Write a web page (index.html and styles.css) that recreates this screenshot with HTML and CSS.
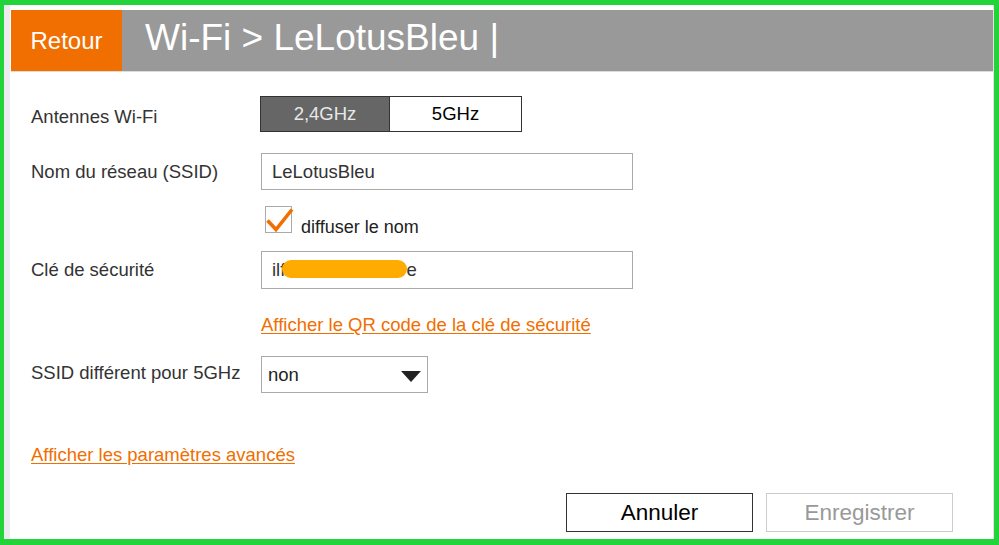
FILE: index.html
```html
<!DOCTYPE html>
<html lang="fr">
<head>
<meta charset="utf-8">
<title>Wi-Fi</title>
<link rel="stylesheet" href="styles.css">
</head>
<body>
<div class="frame">
  <div class="shell">
    <header class="header">
      <div class="back">Retour</div>
      <h1 class="title">Wi-Fi &gt; LeLotusBleu |</h1>
    </header>
    <main class="form">
      <div class="row row-antenna">
        <div class="label label-antenna">Antennes Wi-Fi</div>
        <div class="toggle">
          <div class="seg seg-on">2,4GHz</div>
          <div class="seg">5GHz</div>
        </div>
      </div>
      <div class="row row-ssid">
        <div class="label">Nom du réseau (SSID)</div>
        <div class="input">LeLotusBleu</div>
      </div>
      <div class="row row-check">
        <div class="label"></div>
        <div class="check">
          <div class="box">
            <svg width="27" height="27" viewBox="0 0 27 27"><path d="M2.5 14.5 L11 23.5 L27 3.5" fill="none" stroke="#f16e00" stroke-width="3.6"/></svg>
          </div>
          <span class="check-text">diffuser le nom</span>
        </div>
      </div>
      <div class="row row-key">
        <div class="label">Clé de sécurité</div>
        <div class="input input-key">ilf<span class="mask"></span>e</div>
      </div>
      <div class="row row-qr">
        <div class="label"></div>
        <a class="link" href="#">Afficher le QR code de la clé de sécurité</a>
      </div>
      <div class="row row-select">
        <div class="label label-select">SSID différent pour 5GHz</div>
        <div class="select">
          <span>non</span>
          <svg class="caret" width="20" height="11" viewBox="0 0 20 11"><path d="M0 0 H20 L10 11 Z" fill="#222"/></svg>
        </div>
      </div>
      <div class="row row-adv">
        <a class="link" href="#">Afficher les paramètres avancés</a>
      </div>
      <div class="actions">
        <button class="btn btn-cancel">Annuler</button>
        <button class="btn btn-save">Enregistrer</button>
      </div>
    </main>
  </div>
</div>
</body>
</html>
```

FILE: styles.css
```css
* { box-sizing: border-box; }
html, body { margin: 0; padding: 0; }
body {
  width: 999px;
  height: 545px;
  overflow: hidden;
  font-family: "Liberation Sans", Arial, sans-serif;
  background: #fff;
}
.frame {
  width: 999px;
  height: 545px;
  border: 5px solid #22d33a;
  border-left-width: 4px;
  border-bottom-width: 6px;
  display: flex;
}
.shell {
  flex: 1;
  border-left: 6px solid #ececf0;
  border-right: 1px solid #e2e2e2;
  padding-top: 5px;
  display: flex;
  flex-direction: column;
}
.header {
  display: flex;
  height: 62px;
  margin-left: 1px;
  background: #999;
  border-bottom: 1px solid #dcdcdc;
}
.back {
  width: 111px;
  background: #f16e00;
  color: #fff;
  font-size: 24px;
  display: flex;
  align-items: center;
  justify-content: center;
}
.title {
  margin: 0 0 0 23px;
  font-weight: normal;
  font-size: 37px;
  color: #fff;
  display: flex;
  align-items: center;
  padding-bottom: 5px;
}
.form {
  padding-left: 21px;
  display: flex;
  flex-direction: column;
  color: #333;
  font-size: 18.5px;
}
.row {
  display: flex;
  align-items: center;
}
.label {
  width: 230px;
  flex: none;
}
.label-antenna { padding-top: 5px; }
.label-select { padding-bottom: 3px; }
.row-antenna { margin-top: 24px; }
.toggle {
  display: flex;
  height: 36px;
  border: 1px solid #333;
  margin-left: -1px;
}
.seg {
  width: 131px;
  display: flex;
  align-items: center;
  justify-content: center;
  color: #000;
  background: #fff;
}
.seg-on {
  width: 129px;
  background: #666;
  color: #e8e8e8;
  border-right: 1px solid #333;
}
.row-ssid { margin-top: 21px; }
.input {
  width: 372px;
  height: 37px;
  border: 1px solid #aaa;
  padding-left: 10px;
  display: flex;
  align-items: center;
  color: #333;
}
.row-check { margin-top: 16px; align-items: flex-end; }
.check {
  display: flex;
  align-items: flex-end;
  margin-left: 4px;
}
.box {
  width: 27px;
  height: 27px;
  border: 1px solid #aaa;
  position: relative;
}
.box svg {
  position: absolute;
  left: -1px;
  top: -1px;
  overflow: visible;
}
.check-text {
  margin-left: 9px;
  font-size: 18px;
  line-height: 18px;
  color: #222;
  position: relative;
  top: 3px;
}
.row-key { margin-top: 18px; }
.input-key { height: 38px; }
.mask {
  display: inline-block;
  width: 125px;
  height: 18px;
  margin-left: -3px;
  margin-right: -1px;
  background: #ffab00;
  border-radius: 9px;
  position: relative;
  top: -1px;
}
.row-qr { margin-top: 25px; }
.link {
  color: #f16e00;
  line-height: 22px;
  text-decoration: underline;
  text-underline-offset: 2px;
}
.row-select { margin-top: 20px; }
.select {
  width: 167px;
  height: 37px;
  border: 1px solid #aaa;
  padding-left: 6px;
  padding-right: 6px;
  display: flex;
  align-items: center;
  justify-content: space-between;
  color: #222;
}
.caret { margin-top: 3px; }
.row-adv { margin-top: 51px; }
.actions {
  margin-top: 27px;
  display: flex;
  justify-content: flex-end;
  gap: 13px;
  padding-right: 40px;
}
.btn {
  width: 187px;
  height: 39px;
  font-family: "Liberation Sans", Arial, sans-serif;
  font-size: 22.5px;
  background: #fff;
  padding: 0;
}
.btn-cancel {
  border: 1px solid #333;
  color: #000;
}
.btn-save {
  border: 1px solid #ccc;
  color: #999;
}
```
